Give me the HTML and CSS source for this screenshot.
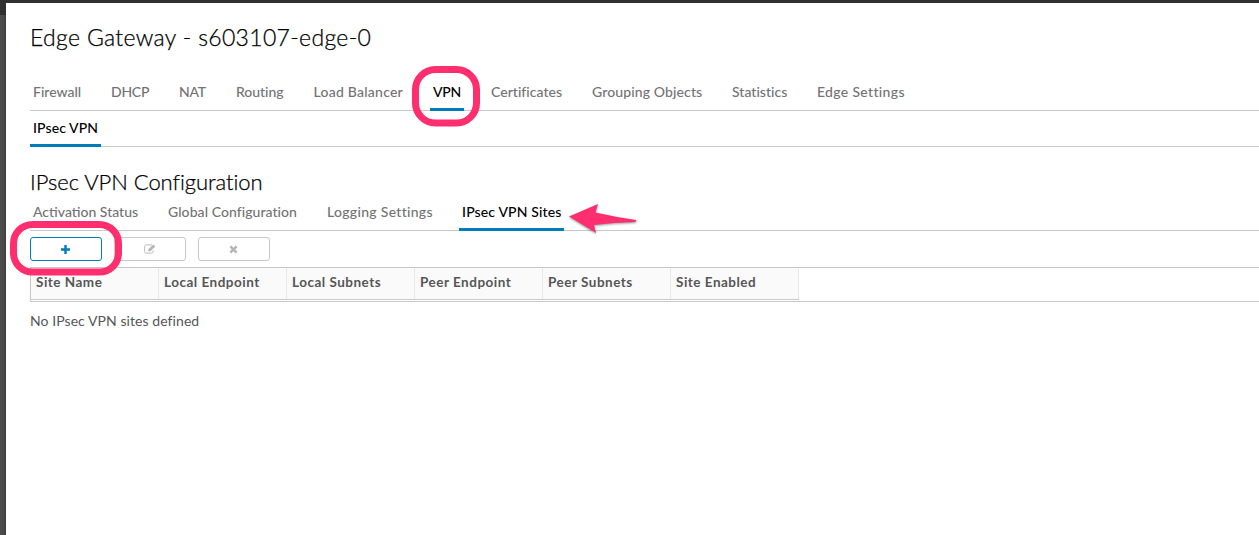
FILE: index.html
```
<!DOCTYPE html>
<html lang="en">
<head>
<meta charset="utf-8">
<title>Edge Gateway</title>
<link rel="stylesheet" href="styles.css">
</head>
<body>
<main class="modal">
  <h1 class="title">Edge Gateway - s603107-edge-0</h1>
  <nav class="tabs">
    <a class="tab firewall">Firewall</a>
    <a class="tab dhcp">DHCP</a>
    <a class="tab nat">NAT</a>
    <a class="tab routing">Routing</a>
    <a class="tab balancer">Load Balancer</a>
    <a class="tab vpn active">VPN</a>
    <a class="tab certificates">Certificates</a>
    <a class="tab grouping">Grouping Objects</a>
    <a class="tab statistics">Statistics</a>
    <a class="tab settings">Edge Settings</a>
  </nav>
  <nav class="tabs">
    <a class="tab ipsec active">IPsec VPN</a>
  </nav>
  <h2 class="subtitle">IPsec VPN Configuration</h2>
  <nav class="tabs">
    <a class="tab activation">Activation Status</a>
    <a class="tab global">Global Configuration</a>
    <a class="tab logging">Logging Settings</a>
    <a class="tab sites active">IPsec VPN Sites</a>
  </nav>
  <div class="toolbar">
    <button class="btn add" aria-label="Add"><svg width="9" height="9" viewBox="0 0 9 9"><path d="M3.3 0h2.4v3.3H9v2.4H5.7V9H3.3V5.7H0V3.3h3.3z"/></svg></button>
    <button class="btn" aria-label="Edit"><svg width="12" height="10" viewBox="0 0 12 10"><path d="M8 .9H2.2Q.6.9.6 2.4v5.2q0 1.500 1.600 1.500h5.400q1.500 0 1.500-1.500V6.300" fill="none" stroke="#bdbdbd"/><path d="M4.300 5.200 9.300.4l2 2-5 4.900h-2z"/></svg></button>
    <button class="btn" aria-label="Delete"><svg width="9" height="9" viewBox="0 0 9 9"><path d="m2.3.5 2.2 2.2L6.700.5l1.800 1.800-2.200 2.200 2.200 2.200-1.800 1.800-2.200-2.200-2.200 2.200L.5 6.700l2.200-2.200L.5 2.300z"/></svg></button>
  </div>
  <section class="grid">
    <div class="row">
      <div class="cell">Site Name</div>
      <div class="cell">Local Endpoint</div>
      <div class="cell">Local Subnets</div>
      <div class="cell">Peer Endpoint</div>
      <div class="cell">Peer Subnets</div>
      <div class="cell">Site Enabled</div>
    </div>
  </section>
  <p class="empty">No IPsec VPN sites defined</p>
</main>
<svg class="marks" width="1259" height="535" viewBox="0 0 1259 535">
  <rect class="ring" x="415.5" y="69.5" width="61" height="53.5" rx="20"/>
  <rect class="ring" x="13.500" y="224.5" width="105" height="47.500" rx="19"/>
  <path class="arrow" d="M569 216.500 598 204 595.500 212.500Q615 217 636 220Q637 221.500 635 222Q614 222.500 594 225L596 233Z"/>
</svg>
</body>
</html>
```
FILE: styles.css
```
* { box-sizing: border-box; }
body { margin: 0; height: 535px; overflow: hidden; padding: 3px 0 0 6px; background: linear-gradient(90deg, #4d4d4d 0, #484848 4px, #3b3b3b 6px) 0 15px no-repeat, #303030; font-family: Lato, "Open Sans", sans-serif; color: #000; }
.modal { height: 532px; padding-left: 24px; background: #fff; }
h1, h2, p { margin: 0; white-space: nowrap; }
h1, h2 { -webkit-text-stroke: .25px #000; }
.title { height: 72px; padding-top: 19px; font-size: 23px; line-height: 30px; font-weight: 300; letter-spacing: .33px; }
.tabs { display: flex; gap: 24px; height: 36px; border-bottom: 1px solid #c8c8c8; }
.tab { flex: none; height: 36px; padding: 0 3px; font-size: 14px; line-height: 33px; font-weight: 500; color: #737373; white-space: nowrap; }
.tab.active { color: #000; border-bottom: 3px solid #007cbb; }
.firewall { width: 54px; }
.dhcp { width: 44px; letter-spacing: -.25px; }
.nat { width: 33px; letter-spacing: -.2px; }
.routing { width: 53.5px; letter-spacing: -.05px; }
.balancer { width: 95.5px; letter-spacing: .24px; }
.vpn { width: 34px; letter-spacing: -.2px; }
.certificates { width: 77px; letter-spacing: .03px; }
.grouping { width: 116px; letter-spacing: .12px; }
.statistics { width: 61px; letter-spacing: .02px; }
.settings { width: 93.5px; letter-spacing: .33px; }
.ipsec { width: 71px; letter-spacing: .09px; }
.activation { width: 111px; }
.global { width: 135px; letter-spacing: .06px; }
.logging { width: 111px; letter-spacing: .3px; }
.sites { width: 105px; letter-spacing: .15px; }
.subtitle { height: 48px; padding-top: 20px; font-size: 22px; line-height: 30px; font-weight: 300; letter-spacing: -.05px; }
.toolbar { display: flex; gap: 12px; height: 36px; padding-top: 6px; }
.btn { display: flex; align-items: center; justify-content: center; width: 72px; height: 24px; padding: 0 1px 0 0; border: 1px solid #c8c8c8; border-radius: 3px; background: #fff; fill: #b5b5b5; }
.btn.add { border-color: #007cbb; fill: #007cbb; }
.grid { height: 35px; border: 1px solid #c8c8c8; border-right: 0; }
.row { display: flex; width: 768px; height: 32px; border-bottom: 1px solid #c8c8c8; background: #fafafa; }
.cell { width: 128px; padding-left: 5px; border-right: 1px solid #e8e8e8; font-size: 13.5px; line-height: 29px; font-weight: 700; letter-spacing: .5px; color: #565656; white-space: nowrap; }
.empty { padding-top: 7px; font-size: 14px; line-height: 24px; letter-spacing: .07px; color: #565656; }
.marks { position: absolute; left: 0; top: 0; pointer-events: none; }
.ring { fill: none; stroke: #ff2e6e; stroke-width: 7; }
.arrow { fill: #ff2e6e; filter: drop-shadow(0 1px 1px rgba(0, 0, 0, .4)); }
```
